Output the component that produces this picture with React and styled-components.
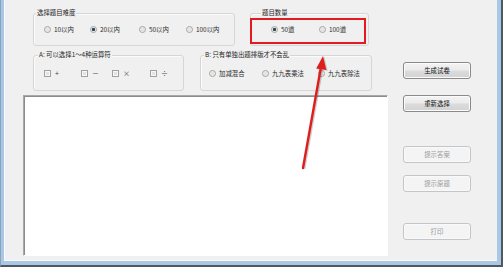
import React from "react"
import styled, { createGlobalStyle } from "styled-components"

const GlobalStyle = createGlobalStyle`
  html, body {
    margin: 0;
    padding: 0;
    background: #f0f0f0;
  }
  body {
    font-family: "Noto Sans CJK SC", "Noto Sans", sans-serif;
  }
`

const Frame = styled.div`
  width: 503px;
  height: 267px;
  box-sizing: border-box;
  display: flex;
  border-left: 1px solid #8ea3b8;
  border-right: 2px solid #50575e;
  border-bottom: 2px solid #50575e;
`

const Glass = styled.div`
  flex: 1;
  display: flex;
  border-left: 3px solid #a9c7e6;
  border-right: 4px solid #a9c7e6;
  border-bottom: 4px solid #a9c7e6;
`

const Client = styled.div`
  flex: 1;
  position: relative;
  display: flex;
  background: #f0f0f0;
  border-left: 1px solid #fafafa;
  border-bottom: 1px solid #fafafa;
`

const MainColumn = styled.div`
  margin-left: 18px;
  width: 365px;
  display: flex;
  flex-direction: column;
`

const GroupRow = styled.div`
  display: flex;
  padding-left: 10px;
  margin-top: ${props => props.top}px;
`

const GroupBox = styled.div`
  position: relative;
  box-sizing: border-box;
  width: ${props => props.w}px;
  height: ${props => props.h}px;
  margin-left: ${props => props.ml || 0}px;
  border: 1px solid #d6d6d6;
  border-radius: 3px;
  box-shadow: inset 1px 1px 0 #fbfbfb;
  display: flex;
  align-items: center;
  padding-left: ${props => props.pad}px;
`

const GroupTitle = styled.span`
  position: absolute;
  top: -6px;
  left: ${props => props.x}px;
  padding: 0 1px;
  background: #f0f0f0;
  font-size: 6.4px;
  line-height: 9px;
  color: #1e1e1e;
  white-space: nowrap;
`

const Option = styled.label`
  display: flex;
  align-items: center;
  gap: 3px;
  width: ${props => (props.w ? `${props.w}px` : "auto")};
  font-size: 6.4px;
  line-height: 9px;
  color: #2a2a2a;
  white-space: nowrap;
`

const Radio = styled.span`
  flex: none;
  width: 7px;
  height: 7px;
  box-sizing: border-box;
  border-radius: 50%;
  border: 1px solid #a3a3a3;
  background: ${props =>
    props.checked
      ? "radial-gradient(circle, #30404f 0 1.3px, #dfe3e6 1.8px, #f6f6f6 3px)"
      : "radial-gradient(circle, #e4e4e4 0 1.5px, #f7f7f7 3px)"};
`

const Check = styled.span`
  flex: none;
  width: 7px;
  height: 7px;
  box-sizing: border-box;
  border: 1px solid #a0a0a0;
  background: #e3e3e3;
  box-shadow: inset 0 0 0 1px #f7f7f7;
`

const Operator = styled.span`
  font-size: 7px;
  color: #444;
  margin-left: 1px;
`

const Marker = styled.div`
  position: absolute;
  left: -1px;
  top: 4px;
  width: 116px;
  height: 26px;
  box-sizing: border-box;
  border: 2px solid #e21b22;
`

const Output = styled.div`
  margin-top: 4px;
  height: 161px;
  box-sizing: border-box;
  background: #fff;
  border: 1px solid;
  border-color: #a9a9a9 #ffffff #ffffff #a9a9a9;
  box-shadow: inset 1px 1px 0 #8c8c8c;
`

const ButtonColumn = styled.div`
  margin-left: 15px;
  width: 68px;
  display: flex;
  flex-direction: column;
`

const Button = styled.button`
  margin: ${props => props.top}px 0 0;
  height: 17px;
  padding: 0;
  box-sizing: border-box;
  border-radius: 3px;
  font-family: "Noto Sans CJK SC", sans-serif;
  font-size: 6.4px;
  line-height: 9px;
  border: 1px solid ${props => (props.disabled ? "#c3c6c8" : "#8a8a8a")};
  color: ${props => (props.disabled ? "#9a9a9a" : "#111")};
  background: ${props =>
    props.disabled
      ? "#f4f4f4"
      : "linear-gradient(#f3f3f3 0%, #ebebeb 48%, #dcdcdc 52%, #d2d2d2 100%)"};
  box-shadow: inset 0 0 0 1px ${props => (props.disabled ? "#f9f9f9" : "#fbfbfb")};
`

const ArrowLayer = styled.svg`
  position: absolute;
  left: 286px;
  top: 50px;
  overflow: visible;
  pointer-events: none;
`

function Arrow() {
  return (
    <ArrowLayer width="40" height="125" viewBox="0 0 40 125">
      <g opacity="0.25" transform="translate(1.2 0.8)">
        <line x1="12" y1="118" x2="29.8" y2="18" stroke="#333" strokeWidth="2.4" />
        <polygon points="32,6 35.5,20 25,18.5" fill="#333" />
      </g>
      <line x1="12" y1="118" x2="29.8" y2="18" stroke="#e01d1d" strokeWidth="2.4" strokeLinecap="round" />
      <polygon points="32,6 35.3,20 25.2,18.4" fill="#e01d1d" />
    </ArrowLayer>
  )
}

const levels = [
  { label: "10以内", w: 46 },
  { label: "20以内", w: 49, checked: true },
  { label: "50以内", w: 47 },
  { label: "100以内" }
]

const operators = [
  { sign: "+", w: 37 },
  { sign: "－", w: 31 },
  { sign: "×", w: 38 },
  { sign: "÷" }
]

const modes = [
  { label: "加减混合", w: 53 },
  { label: "九九表乘法", w: 56 },
  { label: "九九表除法" }
]

export default function App() {
  return (
    <>
      <GlobalStyle />
      <Frame>
        <Glass>
          <Client>
            <MainColumn>
              <GroupRow top={13}>
                <GroupBox w={202} h={33} pad={10}>
                  <GroupTitle x={2}>选择题目难度</GroupTitle>
                  {levels.map(item => (
                    <Option key={item.label} w={item.w}>
                      <Radio checked={item.checked} />
                      {item.label}
                    </Option>
                  ))}
                </GroupBox>
                <GroupBox w={119} h={33} ml={15} pad={20}>
                  <GroupTitle x={10}>题目数量</GroupTitle>
                  <Option w={48}>
                    <Radio checked />
                    50道
                  </Option>
                  <Option>
                    <Radio />
                    100道
                  </Option>
                  <Marker />
                </GroupBox>
              </GroupRow>
              <GroupRow top={9}>
                <GroupBox w={151} h={36} pad={10}>
                  <GroupTitle x={4}>A: 可以选择1～4种运算符</GroupTitle>
                  {operators.map(item => (
                    <Option key={item.sign} w={item.w}>
                      <Check />
                      <Operator>{item.sign}</Operator>
                    </Option>
                  ))}
                </GroupBox>
                <GroupBox w={172} h={36} ml={16} pad={8}>
                  <GroupTitle x={3}>B: 只有单独出题排版才不会乱</GroupTitle>
                  {modes.map(item => (
                    <Option key={item.label} w={item.w}>
                      <Radio />
                      {item.label}
                    </Option>
                  ))}
                </GroupBox>
              </GroupRow>
              <Output />
            </MainColumn>
            <ButtonColumn>
              <Button top={62}>生成试卷</Button>
              <Button top={16}>重新选择</Button>
              <Button top={34} disabled>提示答案</Button>
              <Button top={12} disabled>提示原题</Button>
              <Button top={31} disabled>打印</Button>
            </ButtonColumn>
            <Arrow />
          </Client>
        </Glass>
      </Frame>
    </>
  )
}
